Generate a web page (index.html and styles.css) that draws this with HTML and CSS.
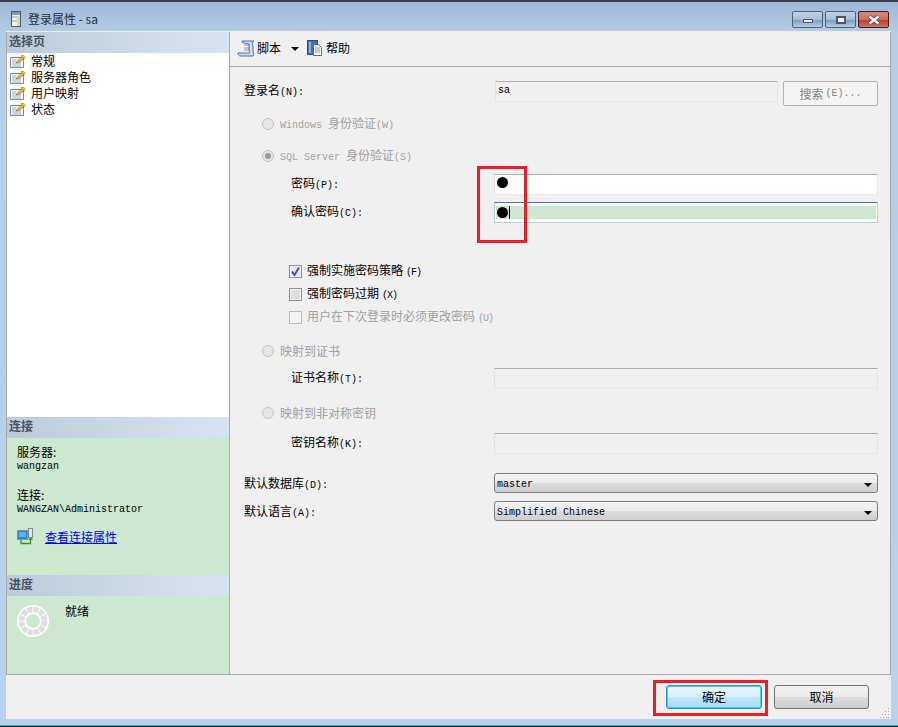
FILE: index.html
```html
<!DOCTYPE html>
<html lang="zh">
<head>
<meta charset="utf-8">
<title>登录属性 - sa</title>
<link rel="stylesheet" href="styles.css">
</head>
<body>
<div class="window">
  <header class="titlebar">
    <svg class="title-icon" width="10" height="16" viewBox="0 0 10 16"><rect x="0.500" y="0.500" width="9" height="15" fill="#f2f4e6" stroke="#4c5a6c"/><rect x="1" y="1" width="8" height="3" fill="#7f96b4"/><path d="M1 6h8M1 10h8" stroke="#93a0b0"/><rect x="6" y="5" width="3" height="10" fill="#d3d8b4"/></svg>
    <span class="title-text">登录属性 - sa</span>
    <div class="controls">
      <div class="ctl ctl-min"><i></i></div>
      <div class="ctl ctl-max"><i></i></div>
      <div class="ctl ctl-close"><svg width="14" height="10" viewBox="0 0 14 10"><path d="M2.500 1.500 11.500 8.500M11.500 1.500 2.500 8.500" stroke="#4a4f58" stroke-width="4"/><path d="M2.500 1.500 11.500 8.500M11.500 1.500 2.500 8.500" stroke="#f2f4f6" stroke-width="2.400"/></svg></div>
    </div>
  </header>

  <div class="client">
    <div class="main">
      <aside class="left">
        <div class="sec-head">选择页</div>
        <ul class="pages">
          <li><svg class="page-icon"><use href="#page"/></svg><span class="page-name is-current">常规</span></li>
          <li><svg class="page-icon"><use href="#page"/></svg><span class="page-name">服务器角色</span></li>
          <li><svg class="page-icon"><use href="#page"/></svg><span class="page-name">用户映射</span></li>
          <li><svg class="page-icon"><use href="#page"/></svg><span class="page-name">状态</span></li>
        </ul>
        <div class="sec-head">连接</div>
        <div class="conn">
          <div class="conn-cap">服务器:</div>
          <div class="mono conn-val">wangzan</div>
          <div class="conn-cap conn-gap">连接:</div>
          <div class="mono conn-val">WANGZAN\Administrator</div>
          <div class="conn-link">
            <svg width="18" height="17" viewBox="0 0 18 17"><rect x="0.500" y="2.500" width="10" height="9" fill="#2f7fd8" stroke="#8092a6"/><rect x="2" y="4" width="7" height="5" fill="#5db4f0"/><rect x="11.500" y="0.500" width="4" height="9" fill="#e8e8e8" stroke="#808890"/><path d="M4 12v3.500h9.500V11" fill="none" stroke="#2f9a18" stroke-width="1.300"/><path d="M11 12l2.500-3 2.500 3z" fill="#2f9a18"/></svg>
            <a href="#" class="link">查看连接属性</a>
          </div>
        </div>
        <div class="sec-head">进度</div>
        <div class="prog">
          <svg width="34" height="34" viewBox="0 0 34 34"><circle cx="17" cy="17" r="16" fill="#fff"/><circle cx="17" cy="17" r="11.500" fill="none" stroke="#dedede" stroke-width="6" stroke-dasharray="5.200 .82"/><circle cx="17" cy="17" r="8" fill="#fff"/><circle cx="17" cy="17" r="7" fill="#cce8cf"/></svg>
          <span class="prog-text">就绪</span>
        </div>
      </aside>

      <section class="right">
        <div class="toolbar">
          <svg width="19" height="19" viewBox="0 0 19 19"><path d="M5 2h12c-2 1-2 3-1 5v6c1 2 1 3 0 4H4c-2 0-3-1-3-3h11c1 0 1-1 0-2V5C5 4 4 3 5 2z" fill="#cfdcee" stroke="#4a6fa5"/><path d="M7 6h6M7 9h6M7 11h5" stroke="#7a97c0"/></svg>
          <span class="tool-label">脚本</span>
          <i class="caret tool-caret"></i>
          <svg class="help-icon" width="16" height="16" viewBox="0 0 16 16"><rect x="0.500" y="0.500" width="10" height="14" fill="#3f73b8" stroke="#2b4f85"/><rect x="2" y="2" width="2" height="11" fill="#8db0dc"/><path d="M6.500 4.500h5l3 3v8h-8z" fill="#f8f8f4" stroke="#5a6a80"/><path d="M8 8h5M8 10h5M8 12h5" stroke="#8a9ab0"/></svg>
          <span class="tool-label tool-label-help">帮助</span>
        </div>
        <div class="form">
          <div class="row">
            <span class="label">登录名<span class="mono">(N):</span></span>
            <div class="field field-short mono">sa</div>
            <div class="search-btn">搜索 <span class="mono">(E)...</span></div>
          </div>
          <div class="row m11 indent-a muted">
            <span class="radio"></span><span><span class="mono">Windows </span>身份验证<span class="mono">(W)</span></span>
          </div>
          <div class="row m10 indent-a muted">
            <span class="radio radio-on"></span><span><span class="mono">SQL Server </span>身份验证<span class="mono">(S)</span></span>
          </div>
          <div class="row m6 indent-b">
            <span class="label">密码<span class="mono">(P):</span></span>
            <div class="field field-white"><i class="dot"></i></div>
          </div>
          <div class="row m6 indent-b">
            <span class="label">确认密码<span class="mono">(C):</span></span>
            <div class="field field-focus"><div class="selection"><i class="dot"></i><i class="cursor"></i></div></div>
          </div>
          <div class="row m37 indent-c">
            <span class="check check-on"><svg width="11" height="11" viewBox="0 0 11 11"><path d="M2 5.500 4.500 9 9 1.500" fill="none" stroke="#3a55a5" stroke-width="2"/></svg></span><span>强制实施密码策略<span class="mono hk">(F)</span></span>
          </div>
          <div class="row m1 indent-c">
            <span class="check"></span><span>强制密码过期<span class="mono hk">(X)</span></span>
          </div>
          <div class="row m1 indent-c muted">
            <span class="check check-off"></span><span>用户在下次登录时必须更改密码<span class="mono hk">(U)</span></span>
          </div>
          <div class="row m12 indent-a muted">
            <span class="radio"></span><span>映射到证书</span>
          </div>
          <div class="row m5 indent-b">
            <span class="label">证书名称<span class="mono">(T):</span></span>
            <div class="field"></div>
          </div>
          <div class="row m13 indent-a muted">
            <span class="radio"></span><span>映射到非对称密钥</span>
          </div>
          <div class="row m8 indent-b">
            <span class="label">密钥名称<span class="mono">(K):</span></span>
            <div class="field"></div>
          </div>
          <div class="row m19">
            <span class="label">默认数据库<span class="mono">(D):</span></span>
            <div class="select mono">master<i class="caret"></i></div>
          </div>
          <div class="row m6">
            <span class="label">默认语言<span class="mono">(A):</span></span>
            <div class="select mono">Simplified Chinese<i class="caret"></i></div>
          </div>
        </div>
      </section>
    </div>
    <footer class="footer">
      <div class="btn btn-default">确定</div>
      <div class="btn">取消</div>
      <svg class="grip" width="10" height="10" viewBox="0 0 10 10"><path d="M8 0h1v1H8zM5 3h1v1H5zM8 3h1v1H8zM2 6h1v1H2zM5 6h1v1H5zM8 6h1v1H8zM0 9h1v1H0zM3 9h1v1H3zM6 9h1v1H6zM8 9h1v1H8z" fill="#a8a8a8"/></svg>
    </footer>
  </div>

  <div class="mark mark-pass"></div>
  <div class="mark mark-ok"></div>
</div>

<svg class="defs" width="0" height="0">
  <symbol id="page" viewBox="0 0 16 16">
    <rect x="0.500" y="4.500" width="13" height="10" fill="#fbfbfb" stroke="#7d8d9c"/>
    <path d="M2 7h4M2 9h8M2 11h9M2 13h9" stroke="#9fb0c0"/>
    <path d="M7 8.500 12 3.500l2.500 1.500-5 4.500-3 .5z" fill="#e9bb34" stroke="#8a6a1c" stroke-width=".6"/>
    <path d="M11 2.500h3l1.500 2-1 1-3-2z" fill="#f4d35a" stroke="#8a6a1c" stroke-width=".5"/>
  </symbol>
</svg>
</body>
</html>
```

FILE: styles.css
```css
* { box-sizing: border-box; }
html, body { margin: 0; padding: 0; }
body {
  width: 898px;
  height: 727px;
  overflow: hidden;
  font-family: "Noto Sans CJK SC", "Liberation Sans", sans-serif;
  font-size: 12px;
  line-height: 16px;
  color: #000;
}
.defs { position: absolute; }
.mono { font-family: "Liberation Mono", "Noto Sans CJK SC", monospace; font-size: 10px; }
.hk { margin-left: 3px; letter-spacing: -1px; }

.window {
  position: relative;
  width: 898px;
  height: 727px;
  display: flex;
  flex-direction: column;
  background: linear-gradient(180deg, #9cb9d6 0, #b5cde6 32px, #b9d1ea 100%);
  border-top: 2px solid #39414d;
  border-bottom: 1px solid #1d2a33;
  box-shadow: inset 0 -1px #2ba7c7;
  padding: 0 7px 7px 6px;
}

/* title bar */
.titlebar {
  height: 29px;
  flex: none;
  display: flex;
  align-items: center;
  padding-left: 5px;
  position: relative;
}
.title-icon { margin-right: 7px; margin-top: 4px; }
.title-text { color: #25303c; margin-top: 4px; }
.controls {
  position: absolute;
  right: 2px;
  top: 9px;
  display: flex;
  gap: 2px;
}
.ctl {
  width: 31px;
  height: 17px;
  border: 1px solid #50617a;
  border-radius: 2px;
  background: linear-gradient(180deg, #c0d3e7 0, #a6bfda 50%, #7f9dbd 55%, #b4cce3 100%);
  display: flex;
  align-items: center;
  justify-content: center;
}
.ctl-min i { width: 10px; height: 4px; background: #eef1f4; border: 1px solid #4c5666; margin-top: 3px; }
.ctl-max i { width: 10px; height: 8px; background: #eef1f4; border: 2px solid #4c5666; }
.ctl-close {
  border-color: #4d1622;
  background: linear-gradient(180deg, #d8897c 0, #cc6e5e 50%, #b8402c 55%, #cf7560 100%);
}

/* client */
.client {
  flex: 1;
  display: flex;
  flex-direction: column;
  background: #f0f0f0;
  border-top: 1px solid #e8eef4;
  min-height: 0;
}
.main { flex: none; height: 643px; display: flex; }

.left {
  width: 224px;
  flex: none;
  display: flex;
  flex-direction: column;
  border-left: 1px solid #a9a9a9;
  border-right: 1px solid #a9a9a9;
  border-bottom: 1px solid #a9a9a9;
}
.sec-head {
  height: 21px;
  flex: none;
  padding: 0 0 0 2px;
  font-weight: 700;
  color: #46525e;
  line-height: 18px;
  background: linear-gradient(90deg, #bccbdb 0, #d6e4f2 100%);
}
.pages {
  list-style: none;
  margin: 0;
  padding: 0;
  height: 364px;
  flex: none;
  background: #fff;
}
.pages li { height: 16px; display: flex; align-items: center; padding-left: 3px; }
.page-icon { width: 16px; height: 16px; flex: none; }
.page-name { margin-left: 4px; padding: 0 1px; }
.is-current { background: #f0f0f0; }

.conn {
  height: 137px;
  flex: none;
  background: #cce8cf;
  padding: 6px 0 0 10px;
}
.conn-cap { line-height: 15px; }
.conn-val { line-height: 11px; margin-top: 2px; }
.conn-gap { margin-top: 15px; }
.conn-link { margin-top: 13px; display: flex; align-items: center; gap: 10px; }
.link { color: #0000ee; text-decoration: underline; }

.prog {
  flex: 1;
  background: #cce8cf;
  display: flex;
  align-items: flex-start;
  padding: 8px 0 0 9px;
}
.prog-text { margin-left: 15px; margin-top: -1px; }

/* right */
.right { flex: 1; display: flex; flex-direction: column; border-right: 1px solid #a9a9a9; border-bottom: 1px solid #a9a9a9; }
.toolbar {
  height: 35px;
  flex: none;
  display: flex;
  align-items: center;
  padding: 0 0 2px 7px;
  border-bottom: 1px solid #a9a9a9;
}
.tool-label { margin-left: 1px; }
.tool-label-help { margin-left: 3px; }
.caret {
  display: block;
  width: 0;
  height: 0;
  border-left: 4px solid transparent;
  border-right: 4px solid transparent;
  border-top: 4px solid #000;
}
.tool-caret { margin-left: 10px; margin-top: 1px; }
.help-icon { margin-left: 8px; }

.form { padding: 13px 12px 0 14px; }
.row { height: 22px; display: flex; align-items: center; }
.label { flex: 1; }
.indent-a { padding-left: 18px; }
.indent-b { padding-left: 47px; }
.indent-c { padding-left: 45px; }
.muted { color: #a0a0a0; }
.m1 { margin-top: 1px; }
.m5 { margin-top: 5px; }
.m6 { margin-top: 6px; }
.m8 { margin-top: 8px; }
.m10 { margin-top: 10px; }
.m11 { margin-top: 11px; }
.m12 { margin-top: 12px; }
.m13 { margin-top: 13px; }
.m19 { margin-top: 19px; }
.m37 { margin-top: 37px; }

.field {
  width: 384px;
  height: 21px;
  background: #f0f0f0;
  border: 1px solid;
  border-color: #abadb3 #e2e3ea #e3e9ef #e2e3ea;
  border-radius: 1px;
  padding-left: 2px;
  display: flex;
  align-items: center;
}
.field-short { width: 283px; }
.field-white { background: #fff; padding: 0 0 3px 2px; }
.field-focus { background: #fff; border-color: #3d7bad #b5cfe7 #b5cfe7 #b5cfe7; padding: 2px 1px 2px 1px; }
.selection { flex: 1; height: 13px; background: #cce8cf; display: flex; align-items: center; padding-left: 1px; }
.dot { display: block; width: 11px; height: 11px; border-radius: 50%; background: #000; }
.cursor { display: block; width: 1px; height: 13px; background: #000; margin-left: 1px; }

.search-btn {
  width: 95px;
  height: 25px;
  margin: 1px 0 0 5px;
  align-self: flex-start;
  border: 1px solid #adb2b5;
  border-radius: 2px;
  background: #f4f4f4;
  color: #838383;
  display: flex;
  align-items: center;
  justify-content: center;
  gap: 2px;
}

.radio {
  width: 12px;
  height: 12px;
  border-radius: 50%;
  border: 1px solid #c4c4c4;
  background: #e6e6e6;
  margin-right: 6px;
  flex: none;
  display: flex;
  align-items: center;
  justify-content: center;
}
.radio-on::after { content: ""; width: 6px; height: 6px; border-radius: 50%; background: #9a9a9a; }

.check {
  width: 13px;
  height: 13px;
  flex: none;
  border: 1px solid #8e8f8f;
  background: #dedede;
  box-shadow: inset 0 0 0 1px #f4f4f4;
  margin-right: 5px;
  display: flex;
  align-items: center;
  justify-content: center;
}
.check-on { background: #e6e6ee; }
.check-off { border-color: #bcbcbc; background: #f4f4f4; box-shadow: none; }

.select {
  width: 384px;
  height: 20px;
  align-self: flex-start;
  border: 1px solid #7b7b7b;
  border-radius: 3px;
  background: linear-gradient(180deg, #f3f3f3 0, #ebebeb 48%, #dcdcdc 52%, #cfcfcf 100%);
  padding: 3px 5px 0 2px;
  display: flex;
  align-items: center;
  justify-content: space-between;
}

/* footer */
.footer {
  flex: 1;
  position: relative;
  display: flex;
  align-items: flex-start;
  justify-content: flex-end;
  gap: 12px;
  padding: 10px 22px 0 0;
}
.btn {
  width: 95px;
  height: 24px;
  border: 1px solid #707070;
  border-radius: 3px;
  background: linear-gradient(180deg, #f2f2f2 0, #ebebeb 48%, #dddddd 52%, #cfcfcf 100%);
  display: flex;
  align-items: center;
  justify-content: center;
}
.btn-default {
  width: 96px;
  border-color: #2c8fc4;
  box-shadow: inset 0 0 0 1px #3fd0f5;
  background: linear-gradient(180deg, #eaf6fd 0, #d9f0fc 48%, #bee6fd 52%, #a7d9f5 100%);
}
.grip { position: absolute; right: 1px; bottom: 1px; }

/* red annotations */
.mark { position: absolute; border: 3px solid #ee1c25; }
.mark-pass { left: 477px; top: 164px; width: 50px; height: 77px; }
.mark-ok { left: 653px; top: 678px; width: 115px; height: 36px; }
```
